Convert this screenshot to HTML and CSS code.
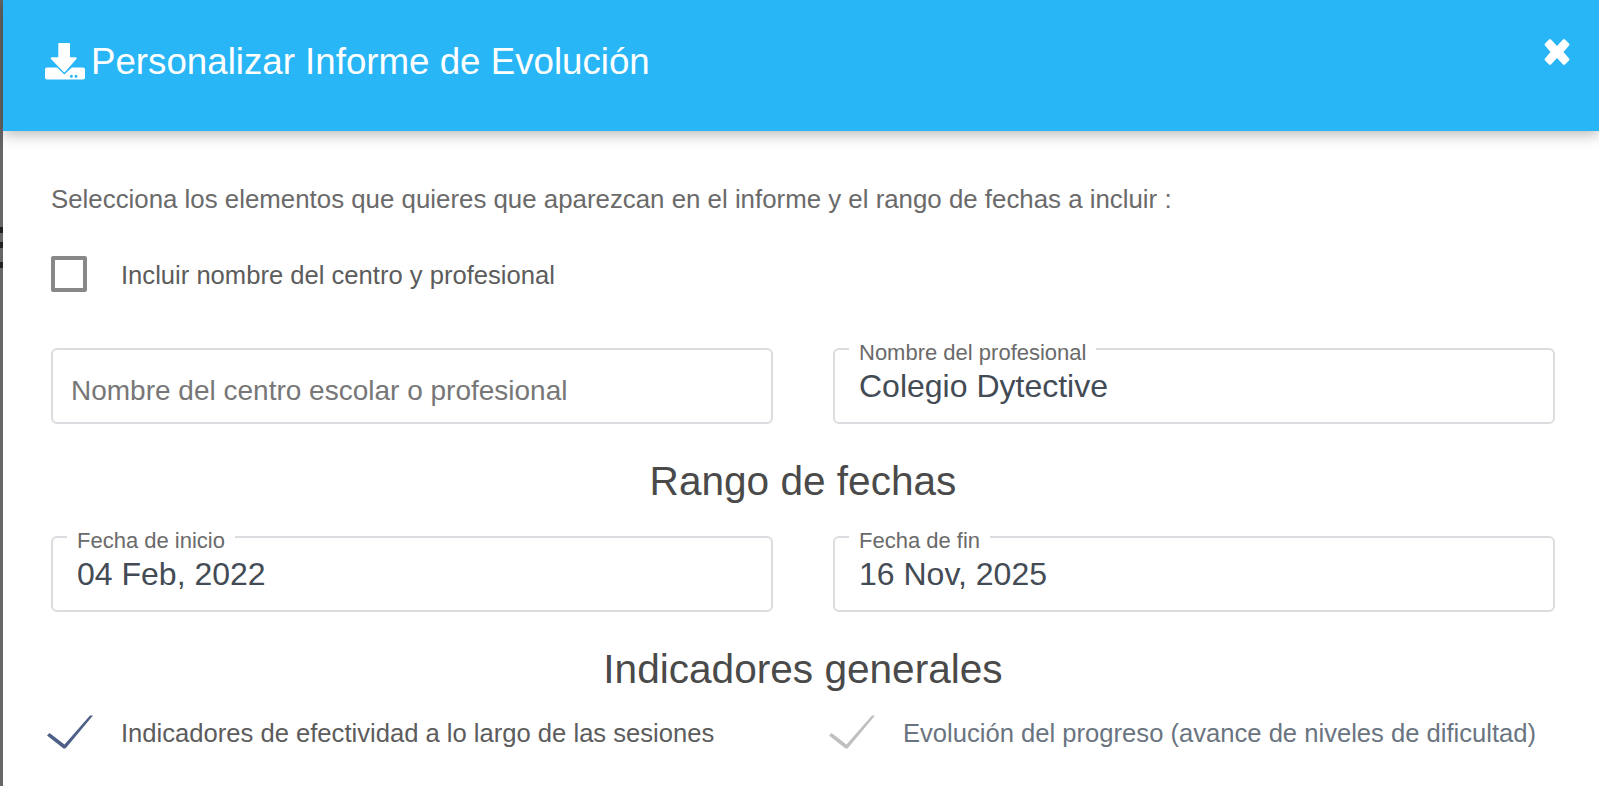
FILE: index.html
```html
<!DOCTYPE html>
<html lang="en">

<head>
    <meta charset="UTF-8">
    <meta name="viewport" content="width=device-width, initial-scale=1.0">
    <title>Personalizar Informe de Evolución</title>
    <link rel="stylesheet" href="styles.css">
</head>

<body>

    <div class="backdropMark"></div>

    <div class="modal">
        <div class="modalHeader">
            <svg class="downloadIcon" viewBox="0 0 40 37">
                <path d="M14.500 0h9.500a1 1 0 0 1 1 1V14.300h5.700a1 1 0 0 1 .7 1.700L20 29a1 1 0 0 1-1.400 0L6 16a1 1 0 0 1 .7-1.700H13.300V1a1 1 0 0 1 1.200-1z" />
                <path fill-rule="evenodd" d="M2 24.500H12L19.300 31.500 26.800 24.500H38a2 2 0 0 1 2 2V34.500a2 2 0 0 1-2 2H2a2 2 0 0 1-2-2V26.500a2 2 0 0 1 2-2zM26.400 31.800a1.500 1.500 0 1 0 0 3 1.500 1.500 0 0 0 0-3zM31 31.800a1.500 1.500 0 1 0 0 3 1.500 1.500 0 0 0 0-3z" />
            </svg>
            <h1>Personalizar Informe de Evolución</h1>
            <svg class="closeIcon" viewBox="0 0 26 28">
                <path d="M7 1.500 13 8l6-6.500a1.500 1.500 0 0 1 2 0l4 4a1.500 1.500 0 0 1 0 2L19.500 14l5.500 6.500a1.500 1.500 0 0 1 0 2l-4 4a1.500 1.500 0 0 1-2 0L13 20l-6 6.500a1.500 1.500 0 0 1-2 0l-4-4a1.500 1.500 0 0 1 0-2L6.500 14 1 7.500a1.500 1.500 0 0 1 0-2l4-4a1.500 1.500 0 0 1 2 0z" />
            </svg>
        </div>

        <div class="modalBody">
            <p class="intro">Selecciona los elementos que quieres que aparezcan en el informe y el rango de fechas a incluir :</p>

            <div class="checkRow">
                <span class="checkbox"></span>
                <span class="rowLabel">Incluir nombre del centro y profesional</span>
            </div>

            <div class="fieldGrid">
                <div class="field">
                    <span class="placeholder">Nombre del centro escolar o profesional</span>
                </div>
                <div class="field">
                    <span class="floatLabel">Nombre del profesional</span>
                    <span class="fieldValue">Colegio Dytective</span>
                </div>
            </div>

            <h2>Rango de fechas</h2>

            <div class="fieldGrid">
                <div class="field">
                    <span class="floatLabel">Fecha de inicio</span>
                    <span class="fieldValue">04 Feb, 2022</span>
                </div>
                <div class="field">
                    <span class="floatLabel">Fecha de fin</span>
                    <span class="fieldValue">16 Nov, 2025</span>
                </div>
            </div>

            <h2 class="lowerTitle">Indicadores generales</h2>

            <div class="optionGrid">
                <div class="option">
                    <svg class="tick" viewBox="0 0 46 34"><path d="M0 20.500 2.500 18 17.500 29.500 43 .5H46L18.500 33.500H16.500z" /></svg>
                    <span class="rowLabel">Indicadores de efectividad a lo largo de las sesiones</span>
                </div>
                <div class="option off">
                    <svg class="tick" viewBox="0 0 46 34"><path d="M0 20.500 2.500 18 17.500 29.500 43 .5H46L18.500 33.500H16.500z" /></svg>
                    <span class="rowLabel">Evolución del progreso (avance de niveles de dificultad)</span>
                </div>
            </div>
        </div>
    </div>

</body>

</html>
```
FILE: styles.css
```css
html,
body {
    height: 100%;
}

body {
    margin: 0;
    overflow: hidden;
    background: #666;
    font-family: "Liberation Sans", Arial, sans-serif;
}

/* bit of the page behind the modal that shows on the left edge */
.backdropMark {
    position: absolute;
    top: 227px;
    left: 0;
    width: 3px;
    height: 41px;
    background: linear-gradient(#222 0 6px, #666 6px 15px, #222 15px 21px, #666 21px 35px, #222 35px);
}

.modal {
    position: relative;
    height: 100%;
    margin-left: 3px;
    background: #fff;
}

.modalHeader {
    display: flex;
    align-items: center;
    height: 131px;
    padding: 0 29px 0 42px;
    box-sizing: border-box;
    background: #29b6f6;
    color: #fff;
    box-shadow: 0 3px 14px rgba(0, 0, 0, 0.3);
}

.modalHeader h1 {
    flex: 1;
    margin: 0 0 8px 6px;
    font-size: 36.7px;
    font-weight: 400;
}

.downloadIcon {
    width: 40px;
    height: 37px;
    margin-bottom: 9px;
    fill: #fff;
}

.closeIcon {
    width: 26px;
    height: 28px;
    margin-bottom: 28px;
    fill: #fff;
}

.modalBody {
    padding: 54px 44px 0 48px;
    color: #5c5c5c;
}

.intro {
    margin: 0;
    font-size: 25.85px;
    line-height: 28px;
    color: #6a6a6a;
}

.checkRow {
    display: flex;
    align-items: center;
    gap: 34px;
    margin-top: 43px;
}

.checkbox {
    width: 36px;
    height: 36px;
    box-sizing: border-box;
    border: 4px solid #888;
    border-radius: 2px;
}

.rowLabel {
    margin-top: 2px;
    font-size: 25.6px;
}

.fieldGrid,
.optionGrid {
    display: grid;
    grid-template-columns: 1fr 1fr;
    column-gap: 60px;
}

.fieldGrid {
    margin-top: 56px;
}

.field {
    position: relative;
    display: flex;
    align-items: center;
    height: 76px;
    padding: 0 24px;
    box-sizing: border-box;
    border: 2px solid #dcdce0;
    border-radius: 6px;
}

.placeholder {
    margin-top: 10px;
    margin-left: -6px;
    font-size: 28px;
    color: #777;
}

.fieldValue {
    font-size: 32px;
    color: #434b55;
}

.floatLabel {
    position: absolute;
    top: -10px;
    left: 14px;
    padding: 0 10px;
    background: #fff;
    font-size: 22px;
    color: #6a6a6a;
}

h2 {
    margin: 0;
    font-size: 40.6px;
    font-weight: 400;
    line-height: 42px;
    text-align: center;
    color: #4a4a4a;
}

.fieldGrid + h2 {
    margin-top: 36px;
}

h2 + .fieldGrid {
    margin-top: 34px;
}

.optionGrid {
    margin-top: 25px;
}

.option {
    display: flex;
    align-items: center;
    gap: 28px;
    margin-left: -4px;
}

.tick {
    width: 46px;
    height: 34px;
    fill: #4e6088;
}

.option.off .tick {
    fill: #bfbfbf;
}

.option.off .rowLabel {
    color: #6a7480;
}
```
